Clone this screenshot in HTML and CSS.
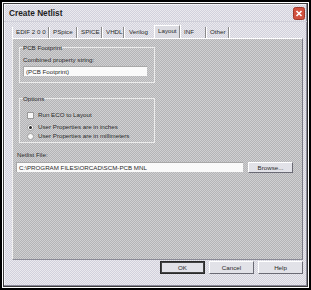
FILE: index.html
```html
<!DOCTYPE html>
<html lang="en">
<head>
    <meta charset="UTF-8">
    <title>Create Netlist</title>
    <link rel="stylesheet" href="styles.css">
</head>
<body>
<div class="frame">
  <div class="dialog">
    <div class="titlebar">
      <span class="title">Create Netlist</span>
      <span class="close">
        <svg width="12" height="13" viewBox="0 0 12 13">
          <rect x="0.5" y="0.5" width="11" height="12" rx="2" fill="#d2523f" stroke="#a03a2c"/>
          <path d="M3.5 4 L8.5 9 M8.5 4 L3.5 9" stroke="#fff" stroke-width="1.6"/>
        </svg>
      </span>
    </div>
    <div class="tabs">
      <span class="tab t-edif">EDIF 2 0 0</span>
      <span class="tab t-pspice">PSpice</span>
      <span class="tab t-spice">SPICE</span>
      <span class="tab t-vhdl">VHDL</span>
      <span class="tab t-verilog">Verilog</span>
      <span class="tab t-layout active">Layout</span>
      <span class="tab t-inf">INF</span>
      <span class="tab t-other">Other</span>
    </div>
    <div class="panel">
      <fieldset class="group g-footprint">
        <legend>PCB Footprint</legend>
        <div class="label">Combined property string:</div>
        <div class="textbox short">(PCB Footprint)</div>
      </fieldset>
      <fieldset class="group g-options">
        <legend>Options</legend>
        <div class="opt first"><span class="check"></span>Run ECO to Layout</div>
        <div class="opt radio-row"><span class="radio on"></span>User Properties are in inches</div>
        <div class="opt radio-row tight"><span class="radio"></span>User Properties are in millimeters</div>
      </fieldset>
      <div class="label netlist">Netlist File:</div>
      <div class="file-row">
        <div class="textbox long">C:\PROGRAM FILES\ORCAD\SCM-PCB MNL</div>
        <span class="btn browse">Browse...</span>
      </div>
    </div>
    <div class="buttons">
      <span class="btn default">OK</span>
      <span class="btn">Cancel</span>
      <span class="btn help">Help</span>
    </div>
  </div>
</div>
</body>
</html>
```
FILE: styles.css
```css
* { box-sizing: border-box; }
body { margin: 0; background: #fff; font-family: "Liberation Sans", Arial, sans-serif; font-size: 6.2px; color: #2a2a2a;}
.frame { width: 311px; height: 290px; border: 2px solid #000; padding: 1px; background: #fff;}
.dialog { height: 100%; border: 1px solid #3a3a3a; background: #dedde4 repeating-conic-gradient(#d2d1dc 0 25%, #eaeaee 0 50%) 0 0 / 2px 2px; box-shadow: inset -1px -1px 0 #8a8898, inset 1px 1px 0 #f4f4f8; display: flex; flex-direction: column;}
.titlebar { height: 18px; display: flex; align-items: center; justify-content: space-between; padding: 0 2px 0 5px; border-bottom: 1px solid #cfcfd8;}
.title { font-weight: bold; font-size: 8.3px; color: #1e1e1e; margin-top: 1px;}
.close { display: flex; margin-top: 1px;}
.close svg { display: block;}
.tabs { height: 16px; display: flex; align-items: flex-end; padding-left: 8px;}
.tab { height: 11px; line-height: 10px; padding-left: 3px; border-right: 1px solid #8a8a8a; box-shadow: 1px 0 0 #fff; white-space: nowrap;}
.t-edif { width: 37px; border-left: 1px solid #fff;}
.t-pspice { width: 28px; padding-left: 4px;}
.t-spice { width: 25px; padding-left: 4px;}
.t-vhdl { width: 22px; padding-left: 4px;}
.t-verilog { width: 30px; padding-left: 5px; border-right: none; box-shadow: none;}
.t-layout { width: 26px; padding-left: 3px;}
.t-inf { width: 26px; padding-left: 4px;}
.t-other { width: 23px; padding-left: 4px;}
.tab.active { height: 13px; line-height: 9px; background: #dcdce2; border-top: 1px solid #fff; border-left: 1px solid #fff;}
.panel { height: 222px; margin: 0 4px 0 8px; background: #c3c3c5 repeating-conic-gradient(#b4b4b6 0 25%, #d0d0d2 0 50%) 0 0 / 2px 2px; border-top: 1px solid #fff; border-left: 1px solid #f0f0f0; border-right: 1px solid #7a7a86; border-bottom: 1px solid #8a8a96; padding: 5px 0 0 6px;}
.group { width: 136px; margin: 0; border: 1px solid #ececec; padding: 0 0 0 3px;}
.group legend { padding: 0; line-height: 7px;}
.g-footprint { height: 39px;}
.g-options { height: 48px; margin-top: 12px;}
.label { line-height: 7px;}
.g-footprint .label { margin-top: 5px;}
.textbox { background: #fafafa; height: 10px; line-height: 10px; padding-left: 2px; border-top: 1px solid #a8a8a8; border-left: 1px solid #a8a8a8; white-space: nowrap;}
.textbox.short { width: 124px; margin-top: 3px;}
.opt { display: flex; align-items: center; height: 8px; line-height: 8px; padding-left: 4px;}
.opt.first { margin-top: 9px;}
.opt.radio-row { margin-top: 4px;}
.opt.radio-row.tight { margin-top: 1px;}
.check { width: 7px; height: 7px; background: #f8f8f8; border: 1px solid #9a9a9a; margin-right: 4px;}
.radio { width: 7px; height: 7px; border-radius: 50%; background: #fafafa; border: 1px solid #a0a0a0; margin-right: 4px; display: flex; align-items: center; justify-content: center;}
.radio.on::after { content: ""; width: 3px; height: 3px; border-radius: 50%; background: #222;}
.label.netlist { margin: 8px 0 0 -2px;}
.file-row { display: flex; gap: 5px; margin: 4px 0 0 -3px;}
.textbox.long { width: 227px;}
.btn { display: flex; align-items: center; justify-content: center; height: 13px; width: 45px; background: #e2e2e8; border-top: 1px solid #fff; border-left: 1px solid #fff; border-right: 1px solid #6a6a74; border-bottom: 1px solid #6a6a74; color: #2a2a2a;}
.btn.browse { height: 11px;}
.buttons { display: flex; justify-content: flex-end; gap: 4px; margin: 1px 4px 0 0;}
.btn.default { outline: 1px solid #2a2a2a; outline-offset: -1px; border-width: 2px; border-color: #444;}
```
